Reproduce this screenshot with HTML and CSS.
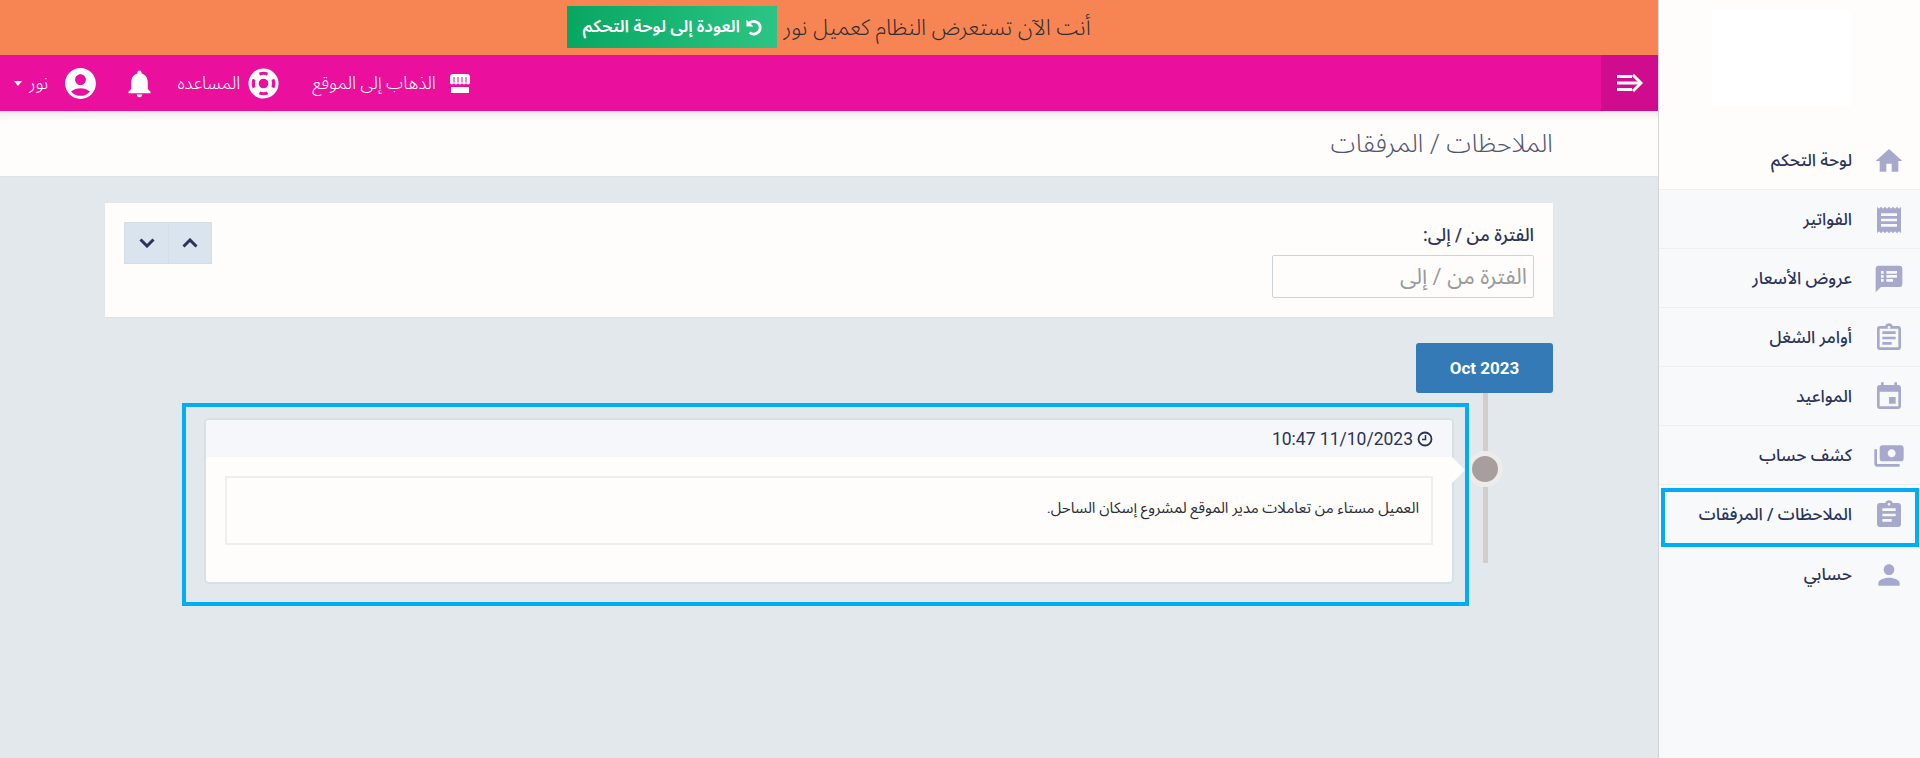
FILE: index.html
```html
<!DOCTYPE html>
<html lang="ar" dir="rtl">
<head>
<meta charset="utf-8">
<title>الملاحظات / المرفقات</title>
<link rel="stylesheet" href="styles.css">
</head>
<body>
<aside class="sidebar">
  <div class="logo-area"><div class="logo"></div></div>
  <nav class="menu">
    <a class="item first"><svg class="mi" viewBox="0 0 24 24"><path d="M10 20v-6h4v6h5v-8h3L12 3 2 12h3v8z"/></svg><span>لوحة التحكم</span></a>
    <a class="item"><svg class="mi" viewBox="0 0 24 24"><path d="M18 17H6v-2h12v2zm0-4H6v-2h12v2zm0-4H6V7h12v2zM3 22l1.5-1.5L6 22l1.5-1.5L9 22l1.5-1.5L12 22l1.5-1.5L15 22l1.5-1.5L18 22l1.5-1.5L21 22V2l-1.5 1.5L18 2l-1.5 1.5L15 2l-1.5 1.5L12 2l-1.5 1.5L9 2 7.5 3.5 6 2 4.5 3.5 3 2v20z"/></svg><span>الفواتير</span></a>
    <a class="item"><svg class="mi" viewBox="0 0 24 24"><path d="M20 2H4c-1.1 0-1.99.9-1.99 2L2 22l4-4h14c1.1 0 2-.9 2-2V4c0-1.1-.9-2-2-2zM8 14H6v-2h2v2zm0-3H6V9h2v2zm0-3H6V6h2v2zm7 6h-5v-2h5v2zm3-3h-8V9h8v2zm0-3h-8V6h8v2z"/></svg><span>عروض الأسعار</span></a>
    <a class="item"><svg class="mi" viewBox="0 0 24 24"><path d="M19 3h-4.18C14.4 1.84 13.3 1 12 1s-2.4.84-2.82 2H5c-1.1 0-2 .9-2 2v14c0 1.1.9 2 2 2h14c1.1 0 2-.9 2-2V5c0-1.1-.9-2-2-2zm-7 0c.55 0 1 .45 1 1s-.45 1-1 1-1-.45-1-1 .45-1 1-1zm7 16H5V5h14v14zM7 7h10v2H7zm0 4h10v2H7zm0 4h7v2H7z"/></svg><span>أوامر الشغل</span></a>
    <a class="item"><svg class="mi" viewBox="0 0 24 24"><path d="M17 12h-5v5h5v-5zM16 1v2H8V1H6v2H5c-1.11 0-1.99.9-1.99 2L3 19c0 1.1.89 2 2 2h14c1.1 0 2-.9 2-2V5c0-1.1-.9-2-2-2h-1V1h-2zm3 18H5V8h14v11z"/></svg><span>المواعيد</span></a>
    <a class="item"><svg class="mi flip" viewBox="0 0 24 24"><path d="M19 14V6c0-1.1-.9-2-2-2H3c-1.1 0-2 .9-2 2v8c0 1.1.9 2 2 2h14c1.1 0 2-.9 2-2zm-9-1c-1.66 0-3-1.34-3-3s1.34-3 3-3 3 1.34 3 3-1.34 3-3 3zm13-6v11c0 1.1-.9 2-2 2H4v-2h17V7h2z"/></svg><span>كشف حساب</span></a>
    <a class="item active"><svg class="mi" viewBox="0 0 24 24"><path d="M19 3h-4.18C14.4 1.84 13.3 1 12 1c-1.3 0-2.4.84-2.82 2H5c-1.1 0-2 .9-2 2v14c0 1.1.9 2 2 2h14c1.1 0 2-.9 2-2V5c0-1.1-.9-2-2-2zm-7 0c.55 0 1 .45 1 1s-.45 1-1 1-1-.45-1-1 .45-1 1-1zm2 14H7v-2h7v2zm3-4H7v-2h10v2zm0-4H7V7h10v2z"/></svg><span>الملاحظات / المرفقات</span><i class="mark mark-item"></i></a>
    <a class="item last"><svg class="mi" viewBox="0 0 24 24"><path d="M12 12c2.21 0 4-1.79 4-4s-1.79-4-4-4-4 1.79-4 4 1.79 4 4 4zm0 2c-2.67 0-8 1.34-8 4v2h16v-2c0-2.66-5.33-4-8-4z"/></svg><span>حسابي</span></a>
  </nav>
</aside>
<main class="main">
  <div class="banner">
    <span>أنت الآن تستعرض النظام كعميل نور</span>
    <a class="back-btn"><svg class="back-ic" viewBox="0 0 24 24"><path d="M6.500 5.500A9 9 0 1 1 6.500 19" fill="none" stroke="#fff" stroke-width="4"/><path d="M2 1v9.500h10z" fill="#fff"/></svg>العودة إلى لوحة التحكم</a>
  </div>
  <header class="topbar">
    <a class="toggle"><svg class="toggle-ic" viewBox="0 0 26 18"><path d="M0 2.500h15M0 9h22M0 15.500h15" fill="none" stroke="#fff" stroke-width="3"/><path d="M16 1l8 8-8 8" fill="none" stroke="#fff" stroke-width="3"/></svg></a>
    <div class="nav-links">
      <a class="nav-link site"><svg class="store" viewBox="0 0 20 19"><path d="M3 0h14c1.700 0 3 1.300 3 3v5.500c0 1.300-.9 2-2 2s-2-.7-2-2c0 1.300-.9 2-2 2s-2-.7-2-2c0 1.300-.9 2-2 2s-2-.7-2-2c0 1.300-.9 2-2 2s-2-.7-2-2c0 1.300-.9 2-2 2s-2-.7-2-2V3c0-1.700 1.300-3 3-3z" fill="#fff"/><path d="M4 3v5.500M8 3v5.500M12 3v5.500M16 3v5.500" fill="none" stroke="#ec0f9f" stroke-width="1"/><path d="M1 13h18v6H1z" fill="#fff"/></svg><span>الذهاب إلى الموقع</span></a>
      <a class="nav-link help"><svg class="ring" viewBox="0 0 32 32"><circle cx="16" cy="16" r="15.500" fill="#fff"/><circle cx="16" cy="16" r="5" fill="#ec0f9f"/><g fill="none" stroke="#ec0f9f" stroke-width="3.200"><path d="M11.800 6.300a10.500 10.500 0 0 1 8.400 0"/><path d="M25.700 11.800a10.500 10.500 0 0 1 0 8.400"/><path d="M20.200 25.700a10.500 10.500 0 0 1-8.400 0"/><path d="M6.300 20.200a10.500 10.500 0 0 1 0-8.400"/></g></svg><span>المساعده</span></a>
      <a class="nav-link bell"><svg class="bell-ic" viewBox="0 0 24 24"><path d="M12 22c1.100 0 2-.9 2-2h-4c0 1.100.89 2 2 2zm6-6v-5c0-3.070-1.640-5.640-4.500-6.320V4c0-.83-.67-1.500-1.500-1.500s-1.500.67-1.500 1.500v.68C7.630 5.360 6 7.920 6 11v5l-2 2v1h16v-1l-2-2z"/></svg></a>
      <a class="nav-link user"><svg class="avatar" viewBox="0 0 24 24"><path d="M12 2C6.480 2 2 6.480 2 12s4.480 10 10 10 10-4.480 10-10S17.520 2 12 2zm0 4c1.930 0 3.500 1.570 3.500 3.500S13.930 13 12 13s-3.500-1.570-3.500-3.500S10.070 6 12 6zm0 14c-2.030 0-4.430-.82-6.140-2.880C7.550 15.800 9.680 15 12 15s4.450.8 6.140 2.120C16.430 19.180 14.030 20 12 20z"/></svg><span>نور</span><i class="caret"></i></a>
    </div>
  </header>
  <div class="page-head"><h1>الملاحظات / المرفقات</h1></div>
  <div class="content">
    <section class="filter">
      <div class="field">
        <label class="field-label">الفترة من / إلى:</label>
        <input class="field-input" type="text" placeholder="الفترة من / إلى">
      </div>
      <div class="tools">
        <button class="tool"><svg viewBox="0 0 16 10"><path d="M1.500 8.500L8 2l6.500 6.500" fill="none" stroke="#2c3358" stroke-width="3"/></svg></button>
        <button class="tool"><svg viewBox="0 0 16 10"><path d="M1.500 1.500L8 8l6.500-6.500" fill="none" stroke="#2c3358" stroke-width="3"/></svg></button>
      </div>
    </section>
    <section class="timeline">
      <div class="month">Oct 2023</div>
      <div class="tl-row">
        <div class="rail"><span class="dot"></span></div>
        <article class="note">
          <i class="mark mark-note"></i>
          <i class="arrow"></i>
          <div class="note-head"><svg class="clock" viewBox="0 0 16 16"><circle cx="8" cy="8" r="6.500" fill="none" stroke="#2c3358" stroke-width="1.800"/><path d="M8.500 4v4.500H5" fill="none" stroke="#2c3358" stroke-width="1.500"/></svg><span dir="ltr">10:47 11/10/2023</span></div>
          <div class="note-body"><div class="note-box">العميل مستاء من تعاملات مدير الموقع لمشروع إسكان الساحل.</div></div>
        </article>
      </div>
    </section>
  </div>
</main>
</body>
</html>
```
FILE: styles.css
```css
* { box-sizing: border-box; }
html, body { height: 100%; }
body {
  margin: 0;
  display: flex;
  height: 758px;
  overflow: hidden;
  font-family: Roboto, "Noto Sans Arabic", sans-serif;
  font-size: 15px;
  color: #2c3358;
  background: #e3e8ec;
}
a { color: inherit; text-decoration: none; }

.sidebar {
  width: 262px;
  flex: none;
  background: #f7f9fb;
  border-left: 1px solid #d3d5d6;
}
.logo-area {
  height: 131px;
  padding: 10px 69px 0 0;
  background: #fefdfb;
}
.logo { width: 139px; height: 96px; background: #fff; }
.item {
  position: relative;
  display: flex;
  align-items: center;
  height: 59px;
  padding-top: 2px;
  gap: 21px;
  font-size: 17px;
  font-weight: 500;
  color: #2c3358;
  border-bottom: 1px solid #eeeff0;
}
.item.first { background: #fefdfb; }
.item.last { border-bottom: 0; }
.mi { width: 32px; height: 32px; fill: #a6a9cb; flex: none; margin-right: 15px; }
.flip { transform: scaleX(-1); }
.mark { position: absolute; border: 4px solid #00adf5; pointer-events: none; }
.mark-item { top: 3px; right: 1px; left: 2px; bottom: -4px; }
.mark-note { top: -17px; right: -17px; bottom: -24px; left: -24px; }

.main { flex: 1; min-width: 0; }
.banner {
  height: 55px;
  display: flex;
  justify-content: center;
  align-items: center;
  gap: 6px;
  background: #f68553;
  font-size: 22.200px;
  font-weight: 300;
  color: #2c2c35;
}
.back-btn {
  display: flex;
  align-items: center;
  justify-content: center;
  gap: 5px;
  width: 210px;
  height: 42px;
  margin-top: -1px;
  font-size: 17px;
  font-weight: 600;
  color: #fff;
  background: linear-gradient(to right, #07a762, #2cc484);
}
.back-ic { width: 17px; height: 17px; }
.topbar {
  position: relative;
  height: 56px;
  display: flex;
  align-items: center;
  background: #eb0f9e;
  color: #fff;
}
.toggle {
  width: 57px;
  height: 56px;
  display: flex;
  align-items: center;
  justify-content: center;
  background: #cf0c8e;
}
.toggle-ic { width: 26px; height: 18px; }
.nav-links {
  display: flex;
  align-items: center;
  margin-right: auto;
  padding-left: 14px;
  font-size: 17.700px;
  font-weight: 300;
}
.nav-link { display: flex; align-items: center; gap: 14px; color: #fff; }
.store { width: 20px; height: 19px; }
.site { margin-left: 33px; }
.ring { width: 31px; height: 31px; }
.help { gap: 8px; margin-left: 21px; }
.bell-ic { width: 33px; height: 33px; fill: #fff; }
.bell { margin-left: 24px; }
.avatar { width: 37px; height: 37px; fill: #fff; }
.user { gap: 14px; }
.caret {
  width: 0;
  height: 0;
  margin-right: -7px;
  border-top: 5px solid #fff;
  border-left: 4.500px solid transparent;
  border-right: 4.500px solid transparent;
}
.page-head {
  height: 66px;
  padding-right: 105px;
  display: flex;
  align-items: center;
  background: #fefdfb;
  border-bottom: 1px solid #dfe3e6;
  box-shadow: inset 0 10px 10px -8px rgba(0,0,0,.12);
}
.page-head h1 { margin: 0; font-size: 25.700px; font-weight: 300; color: #50566e; }
.content { padding: 26px 105px 0; }
.filter {
  height: 114px;
  padding: 19px 19px 0;
  display: flex;
  justify-content: space-between;
  background: #fefdfb;
  box-shadow: 0 1px 1px #dde1e3;
}
.field { width: 262px; }
.field-label { display: block; height: 33px; font-size: 18px; font-weight: 500; line-height: 26px; }
.field-input {
  width: 262px;
  height: 43px;
  padding: 0 6px;
  border: 1px solid #ccd2d6;
  border-radius: 2px;
  background: #fefdfb;
  font: 400 22px Roboto, "Noto Sans Arabic", sans-serif;
  direction: rtl;
}
.field-input::placeholder { color: #9a9a9a; opacity: 1; }
.tools { display: flex; height: 42px; }
.tool {
  width: 44px;
  height: 42px;
  padding: 0;
  display: flex;
  align-items: center;
  justify-content: center;
  background: #dae4ee;
  border: 1px solid #d5dfe3;
}
.tool + .tool { border-right: 0; }
.tool svg { width: 16px; height: 10px; }
.timeline { margin-top: 26px; }
.month {
  width: 137px;
  height: 50px;
  display: flex;
  align-items: center;
  justify-content: center;
  background: #337ab7;
  border-radius: 3px;
  color: #fff;
  font-size: 17px;
  font-weight: 700;
}
.tl-row { display: flex; padding: 0 50px 0 99px; gap: 13px; }
.rail { position: relative; width: 36px; height: 170px; flex: none; display: flex; justify-content: center; }
.rail::before { content: ""; width: 5px; background: #d3cecc; }
.dot {
  position: absolute;
  top: 58px;
  left: 0;
  width: 36px;
  height: 36px;
  border: 5px solid #eeeceb;
  border-radius: 50%;
  background: #a69f9d;
}
.note {
  position: relative;
  flex: 1;
  height: 166px;
  margin-top: 25px;
  background: #fefdfb;
  border: 2px solid #d9e0e3;
  border-radius: 5px;
}
.arrow {
  position: absolute;
  top: 37px;
  right: -13px;
  width: 0;
  height: 0;
  border-top: 13px solid transparent;
  border-bottom: 13px solid transparent;
  border-left: 13px solid #fefdfb;
}
.note-head {
  height: 37px;
  padding-right: 19px;
  display: flex;
  align-items: center;
  gap: 4px;
  background: #f5f7fa;
  font-size: 17.500px;
  font-weight: 400;
  border-radius: 3px 3px 0 0;
}
.clock { width: 16px; height: 16px; }
.note-body { padding: 19px 19px 0; }
.note-box {
  height: 69px;
  padding: 14px 12px 0;
  border: 2px solid #eeeeee;
  font-size: 15.100px;
  color: #2c2c35;
}
```
